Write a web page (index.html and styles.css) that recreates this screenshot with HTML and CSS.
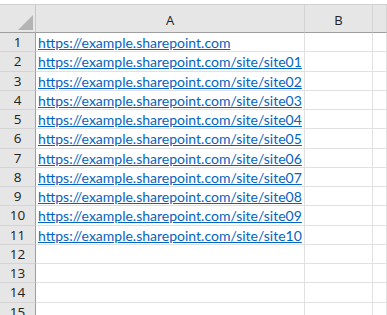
FILE: index.html
```html
<!doctype html>
<html>
 <head>
  <title>Sheet1</title>
  <link rel="stylesheet" href="styles.css">
 </head>
 <body>
  <div class="sheet">
   <div class="corner"><div class="tri"></div></div>
   <div class="colhead">A</div>
   <div class="colhead">B</div>
   <div class="colhead"></div>

   <div class="rowhead">1</div><div class="cell"><a href="#">https://example.sharepoint.com</a></div><div class="cell"></div><div class="cell"></div>
   <div class="rowhead">2</div><div class="cell"><a href="#">https://example.sharepoint.com/site/site01</a></div><div class="cell"></div><div class="cell"></div>
   <div class="rowhead">3</div><div class="cell"><a href="#">https://example.sharepoint.com/site/site02</a></div><div class="cell"></div><div class="cell"></div>
   <div class="rowhead">4</div><div class="cell"><a href="#">https://example.sharepoint.com/site/site03</a></div><div class="cell"></div><div class="cell"></div>
   <div class="rowhead">5</div><div class="cell"><a href="#">https://example.sharepoint.com/site/site04</a></div><div class="cell"></div><div class="cell"></div>
   <div class="rowhead">6</div><div class="cell"><a href="#">https://example.sharepoint.com/site/site05</a></div><div class="cell"></div><div class="cell"></div>
   <div class="rowhead">7</div><div class="cell"><a href="#">https://example.sharepoint.com/site/site06</a></div><div class="cell"></div><div class="cell"></div>
   <div class="rowhead">8</div><div class="cell"><a href="#">https://example.sharepoint.com/site/site07</a></div><div class="cell"></div><div class="cell"></div>
   <div class="rowhead">9</div><div class="cell"><a href="#">https://example.sharepoint.com/site/site08</a></div><div class="cell"></div><div class="cell"></div>
   <div class="rowhead">10</div><div class="cell"><a href="#">https://example.sharepoint.com/site/site09</a></div><div class="cell"></div><div class="cell"></div>
   <div class="rowhead">11</div><div class="cell"><a href="#">https://example.sharepoint.com/site/site10</a></div><div class="cell"></div><div class="cell"></div>
   <div class="rowhead">12</div><div class="cell"></div><div class="cell"></div><div class="cell"></div>
   <div class="rowhead">13</div><div class="cell"></div><div class="cell"></div><div class="cell"></div>
   <div class="rowhead">14</div><div class="cell"></div><div class="cell"></div><div class="cell"></div>
   <div class="rowhead">15</div><div class="cell"></div><div class="cell"></div><div class="cell"></div>
  </div>
 </body>
</html>
```

FILE: styles.css
```css
body {
  margin: 0;
  padding-top: 4px;
  background: #fff;
  overflow: hidden;
  font-family: "Open Sans", sans-serif;
}

.sheet {
  display: grid;
  grid-template-columns: 36px 269px 68px 14px;
  grid-template-rows: 28px repeat(15, 19.27px);
  border-top: 1px solid #d0d0d0;
}

.corner {
  background: #e6e6e6;
  border-right: 1px solid #c8c8c8;
  border-bottom: 1px solid #9e9e9e;
  position: relative;
}

.tri {
  position: absolute;
  right: 2px;
  bottom: 2px;
  width: 0;
  height: 0;
  border-left: 15px solid transparent;
  border-bottom: 15px solid #b4b4b4;
}

.colhead {
  background: #e6e6e6;
  border-right: 1px solid #d4d4d4;
  border-bottom: 1px solid #9e9e9e;
  color: #222;
  font-size: 13px;
  text-align: center;
  line-height: 30px;
}

.rowhead {
  background: #e6e6e6;
  border-right: 1px solid #9e9e9e;
  border-bottom: 1px solid #d4d4d4;
  color: #222;
  font-size: 13.5px;
  text-align: center;
  line-height: 19px;
}

.cell {
  border-right: 1px solid #e1e1e1;
  border-bottom: 1px solid #e1e1e1;
  padding-left: 2px;
  font-family: Lato, sans-serif;
  font-size: 14px;
  line-height: 19px;
  white-space: nowrap;
  overflow: hidden;
}

.cell a {
  color: #0563c1;
  text-decoration: underline;
}
```
